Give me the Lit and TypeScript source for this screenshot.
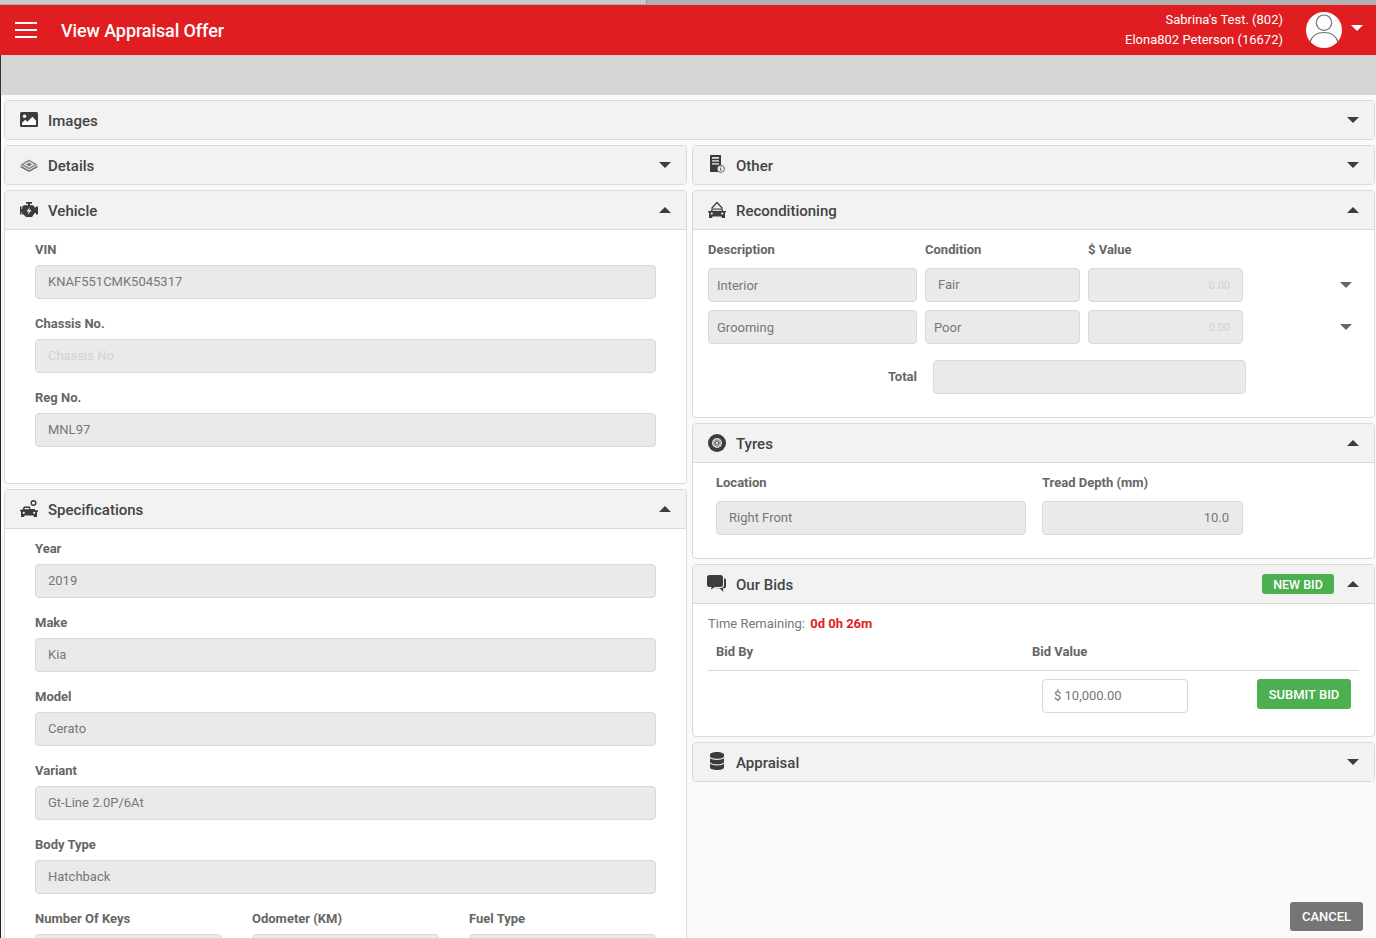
import { LitElement, html, css, svg } from "lit";
import { customElement } from "lit/decorators.js";

const icons: Record<string, any> = {
  image: svg`<svg class="ic" width="18" height="16" viewBox="0 0 18 16"><rect x="0" y="0" width="18" height="15" rx="1.5" fill="#3c3c3c"/><circle cx="4.6" cy="4.3" r="1.7" fill="#fff"/><path d="M2 13v-2.2l3.2-3 2.2 2 5-5L16 8.600V13z" fill="#fff"/></svg>`,
  details: svg`<svg class="ic" width="18" height="13" viewBox="0 0 18 13"><path d="M9 .5 17.500 5.500 9 10.500 .5 5.500z" fill="#8a8a8a"/><path d="M9 2.200 14.600 5.500 9 8.800 3.400 5.500z" fill="#e4e4e4"/><path d="M6 5.500 9 3.700l3 1.800-3 1.800z" fill="#777"/><path d="M.5 6.500 9 11.500l8.500-5v1.800L9 13 .5 8.300z" fill="#666"/></svg>`,
  engine: svg`<svg class="ic" width="18" height="16" viewBox="0 0 18 16"><path d="M6 0h6v1.800h-2v1.400h3.200l1.800 2.200H16V4.500h2v8h-2v-1.500h-1.200L12 15H6L3.500 12.400H2.200V10H1.500v2.500H0v-8h1.500V7h.7V4.500L4 3.200h4V1.800H6z" fill="#3c3c3c"/><path d="M10 5 6.500 9.500h2.200L7.600 13 11.500 8H9.200z" fill="#f2f2f2"/></svg>`,
  doc: svg`<svg class="ic doc" width="15" height="18" viewBox="0 0 15 18"><rect x="0" y="0" width="11" height="17" fill="#3c3c3c"/><rect x="2" y="2" width="7" height="1.800" fill="#ddd"/><rect x="2" y="5" width="7" height="1.800" fill="#bbb"/><rect x="2" y="8" width="7" height="1.800" fill="#bbb"/><circle cx="10.800" cy="13.800" r="3.600" fill="#f2f2f2" stroke="#555" stroke-width=".9"/><rect x="10.300" y="13" width="1" height="3" fill="#555"/><rect x="10.300" y="11.600" width="1" height="1" fill="#555"/></svg>`,
  carPeak: svg`<svg class="ic" width="18" height="18" viewBox="0 0 18 18"><path d="M3.500 7.500 9 1.500l5.500 6" fill="none" stroke="#3c3c3c" stroke-width="1.200"/><path d="M4 7.500h10l1.300 2.400H18v1.300l-1 .3V17h-3.300v-1.500H4.300V17H1v-5.500l-1-.3V9.900h2.700z" fill="#3c3c3c"/><rect x="4.500" y="8.600" width="9" height="1.200" fill="#f2f2f2"/><circle cx="3.800" cy="12.600" r="1.100" fill="#f2f2f2"/><circle cx="14.200" cy="12.600" r="1.100" fill="#f2f2f2"/></svg>`,
  carSpec: svg`<svg class="ic" width="18" height="18" viewBox="0 0 18 18"><circle cx="13.500" cy="3" r="2.300" fill="none" stroke="#3c3c3c" stroke-width="1.500"/><path d="M3.800 6.500h6.500v2.400h4.200l.8 1.400H18v1.400l-1 .3V17h-3.300v-1.500H4.300V17H1v-5.500l-1-.3V9.800h2.400z" fill="#3c3c3c"/><rect x="4.600" y="8" width="4.500" height="1.200" fill="#f2f2f2"/><circle cx="3.800" cy="12.800" r="1.100" fill="#f2f2f2"/><circle cx="14.200" cy="12.800" r="1.100" fill="#f2f2f2"/></svg>`,
  wheel: svg`<svg class="ic" width="18" height="18" viewBox="0 0 18 18"><circle cx="9" cy="9" r="9" fill="#3c3c3c"/><circle cx="9" cy="9" r="5" fill="#e8e8e8"/><path d="M9 4.800v8.400M5 7.700l8 2.600M6.500 12.400l5-6.800M11.500 12.400l-5-6.800M13 7.700l-8 2.600" stroke="#666" stroke-width="1"/><circle cx="9" cy="9" r="1.500" fill="#fff" stroke="#555" stroke-width=".7"/></svg>`,
  comments: svg`<svg class="ic bub" width="19" height="18" viewBox="0 0 19 18"><path fill="#3c3c3c" d="M2.500 0h11A2.500 2.500 0 0 1 16 2.500v7a2.500 2.500 0 0 1-2.500 2.500H8l-4 2.500.6-2.500H2.500A2.500 2.500 0 0 1 0 9.500v-7A2.500 2.500 0 0 1 2.500 0z"/><path fill="#3c3c3c" d="M17 3.200h.2A1.800 1.800 0 0 1 19 5v6.500a1.800 1.800 0 0 1-1.800 1.800H16l.4 3.700-3.800-3.700H8.500l-.9-.3H14a3 3 0 0 0 3-3z"/></svg>`,
  db: svg`<svg class="ic doc" width="14" height="18" viewBox="0 0 448 512" preserveAspectRatio="none"><path fill="#3c3c3c" d="M448 73.143v45.714C448 159.143 347.667 192 224 192S0 159.143 0 118.857V73.143C0 32.857 100.333 0 224 0s224 32.857 224 73.143zM448 176v102.857C448 319.143 347.667 352 224 352S0 319.143 0 278.857V176c48.125 33.143 136.208 48.572 224 48.572S399.874 209.143 448 176zm0 160v102.857C448 479.143 347.667 512 224 512S0 479.143 0 438.857V336c48.125 33.143 136.208 48.572 224 48.572S399.874 369.143 448 336z"/></svg>`,
};

@customElement("app-root")
export class AppRoot extends LitElement {
  static styles = css`
    :host { display: block; font-family: Roboto, "Liberation Sans", sans-serif; color: #444; }
    * { box-sizing: border-box; }
    .page { height: 938px; display: flex; flex-direction: column; overflow: hidden; background: #fafafa; }
    .strip { height: 5px; flex: none; display: flex; background: #c9c9c9; border-bottom: 1px solid #a8a8a8; }
    .strip i { margin-left: 646px; flex: 1; background: #b2b2b2; border-left: 1px solid #999; }
    .top { height: 50px; flex: none; background: #e01e22; color: #fff; display: flex; align-items: center; padding: 0 13px 0 15px; }
    .burger { width: 22px; height: 16px; display: flex; flex-direction: column; justify-content: space-between; margin-right: 24px; }
    .burger i { height: 2px; background: #fff; display: block; }
    .title { font-size: 18px; font-weight: 500; letter-spacing: -0.1px; flex: 1; }
    .user { text-align: right; font-size: 13px; line-height: 20px; margin-right: 23px; margin-top: -1px; }
    .avatar { margin-right: 9px; display: block; }
    .ucaret { width: 0; height: 0; border: 6px solid transparent; border-top: 6px solid #fff; border-bottom: 0; margin-top: -4px; }
    .sub { height: 40px; flex: none; background: #d6d6d6; border-left: 1px solid #333; }
    .body { flex: 1; min-height: 0; display: flex; flex-direction: column; gap: 5px; padding: 5px 1px 0 3px; border-left: 1px solid #222; }
    .cols { flex: 1; min-height: 0; display: grid; grid-template-columns: 683px 683px; gap: 5px; }
    .col { display: flex; flex-direction: column; gap: 5px; min-height: 0; overflow: hidden; }
    .panel { border: 1px solid #d9d9d9; border-radius: 4px; background: #fff; flex: none; }
    .phead { height: 38px; background: #f2f2f2; border-radius: 3px; display: flex; align-items: center; padding: 0 15px; }
    .panel.open .phead { border-bottom: 1px solid #d9d9d9; border-radius: 3px 3px 0 0; height: 39px; }
    .islot { width: 28px; flex: none; display: flex; align-items: center; }
    .ic { display: block; }
    .ic.doc { margin-left: 2px; margin-top: -2px; }
    .ic.bub { margin-left: -1px; }
    .ptitle { flex: 1; font-size: 15px; font-weight: 500; color: #444; padding-top: 2px; }
    .caret { width: 0; height: 0; border-left: 6px solid transparent; border-right: 6px solid transparent; border-top: 6px solid #3c3c3c; }
    .caret.up { border-top: 0; border-bottom: 6px solid #3c3c3c; }
    .caret.soft { border-top-color: #666; }
    .lab { font-size: 13px; font-weight: 700; color: #666; line-height: 16px; display: block; }
    .inp { height: 34px; background: #eaeaea; border: 1px solid #d9d9d9; border-radius: 4px; font-size: 13px; color: #777; display: flex; align-items: center; padding: 0 13px 2px 12px; }
    .inp.empty { color: #d2d2d2; }
    .inp.narrow { padding: 0 8px; }
    .inp.right { justify-content: flex-end; }
    .inp.ph { color: #d2d2d2; font-size: 11px; padding: 0 12px 0 0; }
    .inp.white { background: #fff; padding-left: 11px; }
    .fields { padding: 12px 30px 36px; display: flex; flex-direction: column; gap: 17px; }
    .field .lab { margin-bottom: 7px; }
    .spec { padding-bottom: 0; }
    .three { display: grid; grid-template-columns: 187px 187px 187px; column-gap: 30px; }
    .recon { padding: 12px 15px 23px; }
    .rgrid { display: grid; grid-template-columns: 209px 155px 155px 1fr; column-gap: 8px; row-gap: 8px; align-items: center; }
    .rgrid .lab { margin-bottom: 2px; }
    .rc { justify-self: end; margin-right: 7px; }
    .totalrow { display: grid; grid-template-columns: 209px 313px; column-gap: 16px; align-items: center; margin-top: 16px; }
    .totalrow .lab { text-align: right; }
    .tyres { padding: 12px 23px 23px; display: grid; grid-template-columns: 310px 201px; column-gap: 16px; }
    .tyres .lab { margin-bottom: 10px; }
    .newbid { background: #4caf50; color: #fff; font-size: 12.5px; font-weight: 500; height: 20px; width: 72px; border-radius: 3px; display: flex; align-items: center; justify-content: center; margin-right: 13px; }
    .bids { padding: 12px 15px 23px; }
    .time { font-size: 13px; color: #777; line-height: 16px; }
    .time b { color: #e01e22; margin-left: 2px; font-weight: 700; }
    .bidhead { display: grid; grid-template-columns: 316px 1fr; padding: 12px 8px 10px; border-bottom: 1px solid #d9d9d9; }
    .bidrow { display: flex; margin-top: 8px; padding-left: 334px; align-items: flex-start; }
    .bidrow .inp { width: 146px; }
    .submit { margin-left: 69px; width: 94px; height: 30px; background: #4caf50; color: #fff; border-radius: 3px; font-size: 13px; font-weight: 500; display: flex; align-items: center; justify-content: center; }
    .foot { margin-top: auto; flex: none; display: flex; justify-content: flex-end; padding: 0 12px 7px 0; }
    .cancel { width: 73px; height: 29px; background: #757575; color: #fff; border-radius: 3px; font-size: 13px; font-weight: 500; display: flex; align-items: center; justify-content: center; }
  `;

  private head(icon: string, title: string, open: boolean, extra: any = null) {
    return html`<div class="phead">
      <span class="islot">${icons[icon]}</span>
      <span class="ptitle">${title}</span>
      ${extra}
      <span class="caret ${open ? "up" : ""}"></span>
    </div>`;
  }

  private field(label: string, value: string, empty = false) {
    return html`<div class="field"><span class="lab">${label}</span><div class="inp ${empty ? "empty" : ""}">${value}</div></div>`;
  }

  render() {
    return html`<div class="page">
      <div class="strip"><i></i></div>
      <header class="top">
        <div class="burger"><i></i><i></i><i></i></div>
        <div class="title">View Appraisal Offer</div>
        <div class="user">Sabrina's Test. (802)<br />Elona802 Peterson (16672)</div>
        <svg class="avatar" width="36" height="36" viewBox="0 0 36 36">
          <circle cx="18" cy="18" r="18" fill="#fff" />
          <circle cx="18" cy="10.700" r="7.700" fill="none" stroke="#6d7280" stroke-width="1.200" />
          <path d="M4 30C6 24 11 20.500 18 20.500S30 24 32 30" fill="none" stroke="#6d7280" stroke-width="1.200" />
        </svg>
        <span class="ucaret"></span>
      </header>
      <div class="sub"></div>
      <div class="body">
        <div class="panel">${this.head("image", "Images", false)}</div>
        <div class="cols">
          <div class="col">
            <div class="panel">${this.head("details", "Details", false)}</div>
            <div class="panel open">
              ${this.head("engine", "Vehicle", true)}
              <div class="fields">
                ${this.field("VIN", "KNAF551CMK5045317")}
                ${this.field("Chassis No.", "Chassis No", true)}
                ${this.field("Reg No.", "MNL97")}
              </div>
            </div>
            <div class="panel open">
              ${this.head("carSpec", "Specifications", true)}
              <div class="fields spec">
                ${this.field("Year", "2019")}
                ${this.field("Make", "Kia")}
                ${this.field("Model", "Cerato")}
                ${this.field("Variant", "Gt-Line 2.0P/6At")}
                ${this.field("Body Type", "Hatchback")}
                <div class="three">
                  ${this.field("Number Of Keys", "")}
                  ${this.field("Odometer (KM)", "")}
                  ${this.field("Fuel Type", "")}
                </div>
              </div>
            </div>
          </div>
          <div class="col">
            <div class="panel">${this.head("doc", "Other", false)}</div>
            <div class="panel open">
              ${this.head("carPeak", "Reconditioning", true)}
              <div class="recon">
                <div class="rgrid">
                  <span class="lab">Description</span><span class="lab">Condition</span><span class="lab">$ Value</span><span></span>
                  <div class="inp narrow">Interior</div><div class="inp">Fair</div><div class="inp right ph">0.00</div><span class="caret soft rc"></span>
                  <div class="inp narrow">Grooming</div><div class="inp narrow">Poor</div><div class="inp right ph">0.00</div><span class="caret soft rc"></span>
                </div>
                <div class="totalrow"><span class="lab">Total</span><div class="inp"></div></div>
              </div>
            </div>
            <div class="panel open">
              ${this.head("wheel", "Tyres", true)}
              <div class="tyres">
                <div><span class="lab">Location</span><div class="inp">Right Front</div></div>
                <div><span class="lab">Tread Depth (mm)</span><div class="inp right">10.0</div></div>
              </div>
            </div>
            <div class="panel open">
              ${this.head("comments", "Our Bids", true, html`<span class="newbid">NEW BID</span>`)}
              <div class="bids">
                <div class="time">Time Remaining: <b>0d 0h 26m</b></div>
                <div class="bidhead"><span class="lab">Bid By</span><span class="lab">Bid Value</span></div>
                <div class="bidrow"><div class="inp white">$ 10,000.00</div><div class="submit">SUBMIT BID</div></div>
              </div>
            </div>
            <div class="panel">${this.head("db", "Appraisal", false)}</div>
            <div class="foot"><div class="cancel">CANCEL</div></div>
          </div>
        </div>
      </div>
    </div>`;
  }
}
